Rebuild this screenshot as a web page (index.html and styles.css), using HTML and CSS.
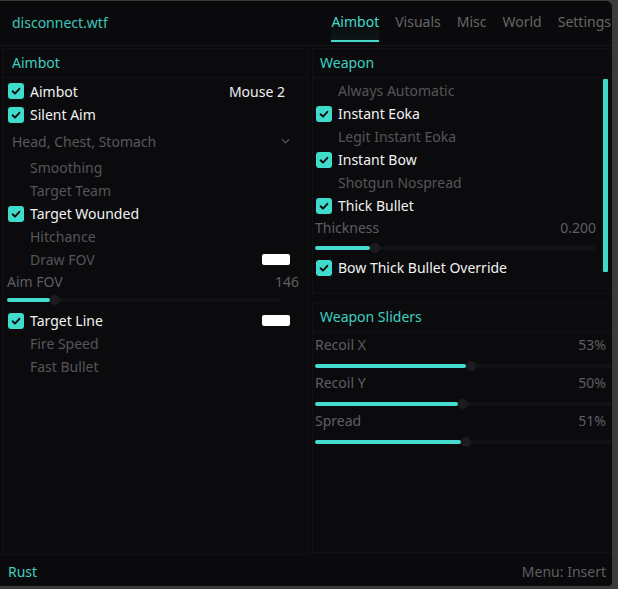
FILE: index.html
```html
<!DOCTYPE html>
<html>
<head>
<meta charset="utf-8">
<link rel="stylesheet" href="styles.css">
</head>
<body>
<div class="window">
  <header class="topbar">
    <div class="brand">disconnect.wtf</div>
    <nav class="tabs">
      <span class="tab active">Aimbot</span>
      <span class="tab">Visuals</span>
      <span class="tab">Misc</span>
      <span class="tab">World</span>
      <span class="tab">Settings</span>
    </nav>
  </header>
  <main class="content">
    <section class="panel left">
      <div class="panel-title">Aimbot</div>
      <div class="rows">
        <div class="row on"><span class="box"><svg viewBox="0 0 16 16"><path d="M4.6 8.3 L7 10.6 L11.4 5.8"/></svg></span><span class="label">Aimbot</span><span class="key">Mouse 2</span></div>
        <div class="row on"><span class="box"><svg viewBox="0 0 16 16"><path d="M4.6 8.3 L7 10.6 L11.4 5.8"/></svg></span><span class="label">Silent Aim</span></div>
        <div class="dropdown"><span>Head, Chest, Stomach</span><svg class="chev" viewBox="0 0 10 6"><path d="M1 1 L5 5 L9 1"/></svg></div>
        <div class="row"><span class="box off"></span><span class="label">Smoothing</span></div>
        <div class="row"><span class="box off"></span><span class="label">Target Team</span></div>
        <div class="row on"><span class="box"><svg viewBox="0 0 16 16"><path d="M4.6 8.3 L7 10.6 L11.4 5.8"/></svg></span><span class="label">Target Wounded</span></div>
        <div class="row"><span class="box off"></span><span class="label">Hitchance</span></div>
        <div class="row"><span class="box off"></span><span class="label">Draw FOV</span><span class="swatch"></span></div>
        <div class="slider s-left">
          <div class="slider-head"><span>Aim FOV</span><span class="val">146</span></div>
          <div class="track"><div class="fill" style="width:43px"></div><span class="knob"></span></div>
        </div>
        <div class="row on"><span class="box"><svg viewBox="0 0 16 16"><path d="M4.6 8.3 L7 10.6 L11.4 5.8"/></svg></span><span class="label">Target Line</span><span class="swatch"></span></div>
        <div class="row"><span class="box off"></span><span class="label">Fire Speed</span></div>
        <div class="row"><span class="box off"></span><span class="label">Fast Bullet</span></div>
      </div>
    </section>
    <div class="col">
      <section class="panel weapon">
        <div class="panel-title">Weapon</div>
        <div class="rows">
          <div class="row"><span class="box off"></span><span class="label">Always Automatic</span></div>
          <div class="row on"><span class="box"><svg viewBox="0 0 16 16"><path d="M4.6 8.3 L7 10.6 L11.4 5.8"/></svg></span><span class="label">Instant Eoka</span></div>
          <div class="row"><span class="box off"></span><span class="label">Legit Instant Eoka</span></div>
          <div class="row on"><span class="box"><svg viewBox="0 0 16 16"><path d="M4.6 8.3 L7 10.6 L11.4 5.8"/></svg></span><span class="label">Instant Bow</span></div>
          <div class="row"><span class="box off"></span><span class="label">Shotgun Nospread</span></div>
          <div class="row on"><span class="box"><svg viewBox="0 0 16 16"><path d="M4.6 8.3 L7 10.6 L11.4 5.8"/></svg></span><span class="label">Thick Bullet</span></div>
          <div class="slider s-weapon">
            <div class="slider-head"><span>Thickness</span><span class="val">0.200</span></div>
            <div class="track"><div class="fill" style="width:55px"></div><span class="knob"></span></div>
          </div>
          <div class="row on"><span class="box"><svg viewBox="0 0 16 16"><path d="M4.6 8.3 L7 10.6 L11.4 5.8"/></svg></span><span class="label">Bow Thick Bullet Override</span></div>
        </div>
        <div class="scrollbar"></div>
      </section>
      <section class="panel sliders">
        <div class="panel-title">Weapon Sliders</div>
        <div class="rows">
          <div class="slider s-wide">
            <div class="slider-head"><span>Recoil X</span><span class="val">53%</span></div>
            <div class="track"><div class="fill" style="width:151px"></div><span class="knob"></span></div>
          </div>
          <div class="slider s-wide">
            <div class="slider-head"><span>Recoil Y</span><span class="val">50%</span></div>
            <div class="track"><div class="fill" style="width:143px"></div><span class="knob"></span></div>
          </div>
          <div class="slider s-wide">
            <div class="slider-head"><span>Spread</span><span class="val">51%</span></div>
            <div class="track"><div class="fill" style="width:146px"></div><span class="knob"></span></div>
          </div>
        </div>
      </section>
    </div>
  </main>
  <footer class="footer">
    <span class="game">Rust</span>
    <span class="hint">Menu: Insert</span>
  </footer>
</div>
</body>
</html>
```

FILE: styles.css
```css
* { box-sizing: border-box; }
html, body { margin: 0; padding: 0; }
body {
  background: #3b3b38;
  width: 618px;
  height: 589px;
  overflow: hidden;
  font-family: "Noto Sans", "Open Sans", sans-serif;
  font-size: 14px;
  padding-top: 1px;
}
.window {
  width: 612px;
  height: 585px;
  background: #0a0a0c;
  border-radius: 0 6px 4px 0;
  display: flex;
  flex-direction: column;
  overflow: hidden;
}
.topbar {
  height: 45px;
  flex: none;
  display: flex;
  align-items: stretch;
  justify-content: space-between;
  border-bottom: 1px solid #16161a;
  padding-left: 12px;
}
.brand {
  color: #3cc7b9;
  line-height: 43px;
  font-size: 14px;
}
.tabs {
  display: flex;
  gap: 16px;
  padding-right: 1px;
}
.tab {
  color: #666;
  line-height: 41px;
  font-size: 14px;
  height: 40px;
  white-space: nowrap;
}
.tab.active {
  color: #45d9ca;
  border-bottom: 2px solid #45d9ca;
  height: 41px;
  background: linear-gradient(to bottom, rgba(69,217,202,0) 50%, rgba(69,217,202,0.06));
}
.content {
  flex: 1;
  display: grid;
  grid-template-columns: 307px 301px;
  column-gap: 3px;
  padding: 2px 0 0 2px;
}
.panel {
  background: #0b0b0e;
  border: 1px solid #121215;
  position: relative;
}
.left {
  height: 507px;
}
.col {
  display: flex;
  flex-direction: column;
  gap: 8px;
}
.weapon { height: 246px; }
.sliders { height: 251px; }
.panel-title {
  height: 29px;
  line-height: 27px;
  color: #3fcfc0;
  padding-left: 9px;
  border-bottom: 1px solid #131316;
}
.weapon .panel-title, .sliders .panel-title { padding-left: 7px; }
.rows {
  padding: 1px 8px 0 5px;
  display: flex;
  flex-direction: column;
}
.weapon .rows { padding: 0 5px 0 3px; }
.sliders .rows { padding: 3px 5px 0 3px; }
.row {
  height: 23px;
  display: flex;
  align-items: center;
  gap: 6px;
}
.row:first-child { height: 24px; }
.box {
  width: 16px;
  height: 16px;
  border-radius: 3px;
  background: #3fdccc;
  flex: none;
  display: flex;
}
.box svg { width: 16px; height: 16px; }
.box path { fill: none; stroke: #0b0b0e; stroke-width: 1.9; stroke-linecap: round; stroke-linejoin: round; }
.box.off { background: transparent; }
.label { color: #555558; white-space: nowrap; }
.row.on .label { color: #f2f2f2; }
.key {
  margin-left: auto;
  color: #eeeeee;
  padding-right: 15px;
}
.swatch {
  margin-left: auto;
  width: 28px;
  height: 11px;
  background: #ffffff;
  border-radius: 2px;
  margin-right: 10px;
}
.dropdown {
  height: 30px;
  display: flex;
  align-items: center;
  justify-content: space-between;
  padding: 0 10px 0 4px;
  color: #58585b;
}
.chev { width: 9px; height: 6px; }
.chev path { fill: none; stroke: #5a5a5d; stroke-width: 1.3; }
.slider {
  height: 38px;
  display: flex;
  flex-direction: column;
}
.slider-head {
  height: 20px;
  display: flex;
  justify-content: space-between;
  align-items: center;
  color: #5e5e62;
}
.val { color: #5e5e62; }
.track {
  height: 4px;
  margin-top: 7px;
  background: #121216;
  border-radius: 2px;
  display: flex;
  align-items: center;
  position: relative;
}
.fill {
  height: 4px;
  background: #45dccd;
  border-radius: 2px;
}
.knob {
  width: 10px;
  height: 10px;
  border-radius: 50%;
  background: #1c1c20;
  flex: none;
}
.s-left { margin-left: -1px; }
.s-left .slider-head { padding-right: 1px; }
.s-left .track { margin-right: 20px; margin-top: 7px; }
.s-weapon { height: 39px; margin-left: -1px; padding-right: 11px; }
.s-weapon .track { margin-top: 9px; }
.s-wide { margin-left: -1px; margin-right: -4px; }
.s-wide .slider-head { height: 19px; padding-right: 5px; }
.s-wide .track { margin-top: 10px; }
.scrollbar {
  position: absolute;
  right: 4px;
  top: 30px;
  width: 5px;
  height: 193px;
  background: #3fd8c9;
  border-radius: 1px;
}
.footer {
  height: 34px;
  flex: none;
  display: flex;
  justify-content: space-between;
  align-items: center;
  padding: 0 6px 2px 8px;
}
.game { color: #3fcfc0; }
.hint { color: #5e5e62; }
```
